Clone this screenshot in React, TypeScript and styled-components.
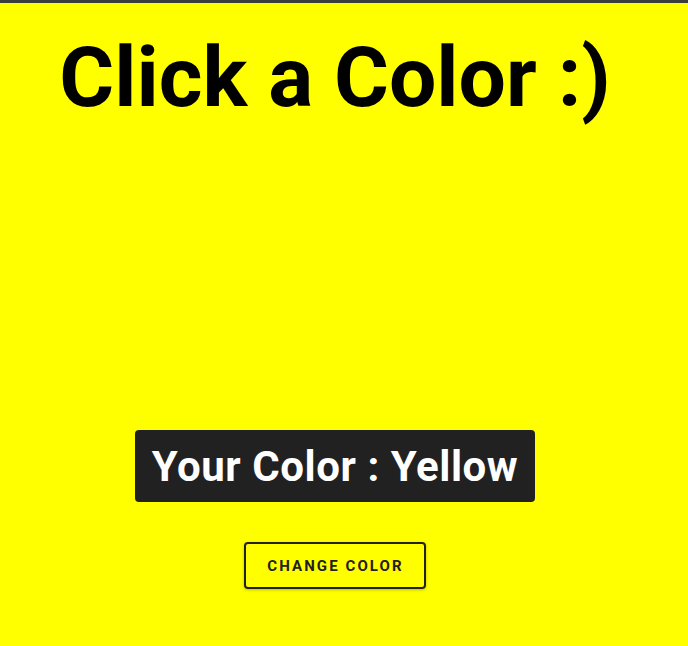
import React from "react";
import styled, { createGlobalStyle } from "styled-components";

const Global = createGlobalStyle`
  html, body { margin: 0; padding: 0; background: #ffff00; }
  body { font-family: Roboto, "Liberation Sans", sans-serif; }
`;

const Page = styled.div`
  min-height: 643px;
  background: #ffff00;
  border-top: 3px solid #3c3c3c;
`;

const Column = styled.div`
  width: 670px;
  display: flex;
  flex-direction: column;
  align-items: center;
`;

const Title = styled.h1`
  margin: 26px 0 0;
  font-family: Roboto, sans-serif;
  font-weight: 700;
  font-size: 84px;
  line-height: 98px;
  color: #000;
`;

const ColorBadge = styled.div`
  margin-top: 303px;
  background: #212121;
  color: #fff;
  border-radius: 4px;
  padding: 0 17px 0 17px;
  height: 72px;
  display: flex;
  align-items: center;
  font-family: Roboto, sans-serif;
  font-weight: 700;
  font-size: 42px;
  letter-spacing: 0.55px;
`;

const ChangeButton = styled.button`
  margin-top: 40px;
  height: 47px;
  padding: 0 20px 0 21px;
  background: transparent;
  border: 2px solid #212121;
  border-radius: 4px;
  box-shadow: 0 1px 3px rgba(0,0,0,0.25);
  color: #212121;
  font-family: Roboto, sans-serif;
  font-weight: 700;
  font-size: 15px;
  letter-spacing: 2.1px;
  text-transform: uppercase;
  cursor: pointer;
`;

export default function App() {
  return (
    <>
      <Global />
      <Page>
        <Column>
          <Title>Click a Color :)</Title>
          <ColorBadge>Your Color : Yellow</ColorBadge>
          <ChangeButton>Change Color</ChangeButton>
        </Column>
      </Page>
    </>
  );
}
